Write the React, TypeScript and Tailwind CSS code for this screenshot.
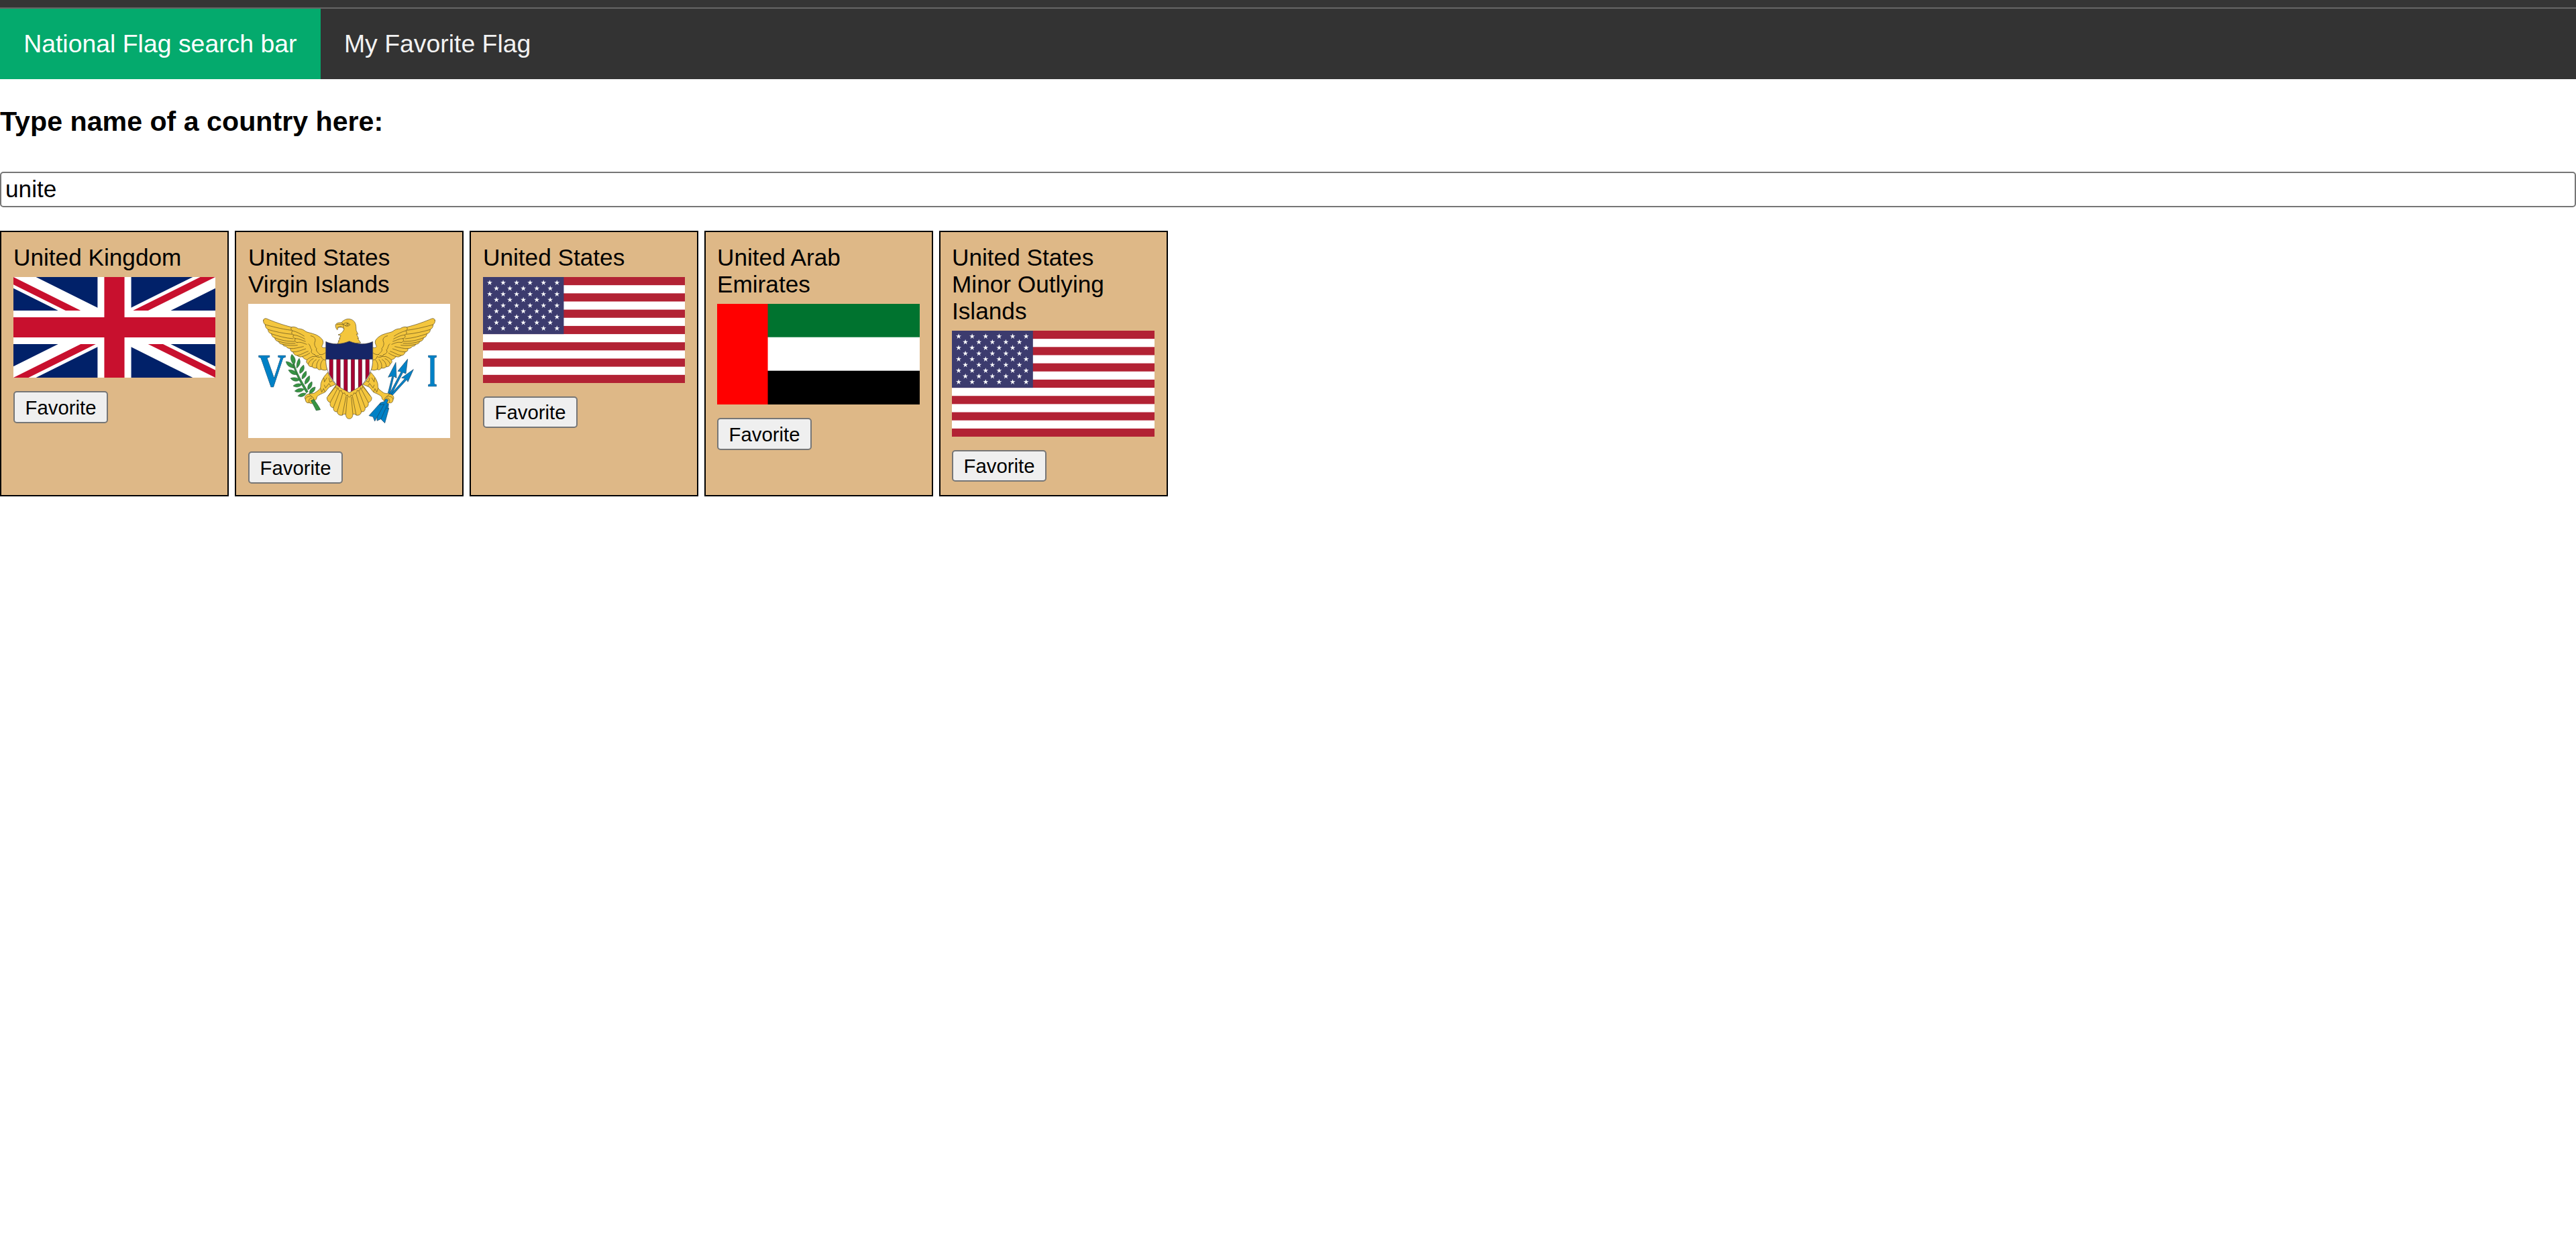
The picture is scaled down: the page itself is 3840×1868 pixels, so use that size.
import React from "react";

const GOLD = "#f4c63d";

function UnitedKingdomFlag() {
  return (
    <svg className="block h-[150px] w-full" viewBox="0 0 60 30" preserveAspectRatio="none">
      <clipPath id="uk-diagonals">
        <path d="M30,15h30v15zv15h-30zh-30v-15zv-15h30z" />
      </clipPath>
      <path d="M0,0v30h60v-30z" fill="#012169" />
      <path d="M0,0L60,30M60,0L0,30" stroke="#fff" strokeWidth="6" />
      <path d="M0,0L60,30M60,0L0,30" clipPath="url(#uk-diagonals)" stroke="#C8102E" strokeWidth="4" />
      <path d="M30,0v30M0,15h60" stroke="#fff" strokeWidth="10" />
      <path d="M30,0v30M0,15h60" stroke="#C8102E" strokeWidth="6" />
    </svg>
  );
}

const STAR = "M0,-4.2L0.95,-1.3H4L1.53,0.5L2.47,3.4L0,1.6L-2.47,3.4L-1.53,0.5L-4,-1.3H-0.95Z";

function UnitedStatesFlag() {
  const stars: React.ReactElement[] = [];
  for (let row = 0; row < 9; row++) {
    const count = row % 2 === 0 ? 6 : 5;
    for (let i = 0; i < count; i++) {
      const x = 10 + i * 20.05 + (row % 2) * 10.03;
      const y = 8.5 + row * 8.5;
      stars.push(<path key={`${row}-${i}`} d={STAR} transform={`translate(${x} ${y})`} />);
    }
  }
  return (
    <svg className="block h-[158px] w-full" viewBox="0 0 301 158" preserveAspectRatio="none">
      <rect width="301" height="158" fill="#fff" />
      {[0, 2, 4, 6, 8, 10, 12].map((i) => (
        <rect key={i} y={(i * 158) / 13} width="301" height={158 / 13} fill="#B22234" />
      ))}
      <rect width="120.4" height="85.1" fill="#3C3B6E" />
      <g fill="#fff">{stars}</g>
    </svg>
  );
}

function EmiratesFlag() {
  return (
    <svg className="block h-[150px] w-full" viewBox="0 0 301 150" preserveAspectRatio="none">
      <rect width="301" height="150" fill="#fff" />
      <rect width="301" height="49.7" fill="#00732F" />
      <rect y="99.7" width="301" height="50.3" fill="#000" />
      <rect width="75.3" height="150" fill="#FF0000" />
    </svg>
  );
}

const SHIELD =
  "M377,208C405,222 445,222 482,206C520,222 559,222 587,208V286C587,329 577,350 545,394C529,414 508,420 482,436C456,420 436,414 419,394C387,350 377,329 377,286Z";

function VirginIslandsFlag() {
  return (
    <svg className="block h-[200px] w-full" viewBox="30 39 903 600" preserveAspectRatio="none">
      <rect x="30" y="39" width="903" height="600" fill="#fff" />
      {/* wings */}
      <g id="vi-wing" fill={GOLD} stroke="#5a4a1c" strokeWidth="2" strokeLinejoin="round" strokeLinecap="round">
        <path d="M98,112C96,118 99,126 106,132C106,142 110,149 119,154C118,163 125,171 134,173C134,182 140,189 149,191C149,199 156,206 165,207C168,215 175,220 184,220C185,226 191,229 199,229C203,236 210,239 219,239C217,247 222,254 231,254C232,263 240,270 249,270C255,276 263,278 272,275C277,283 285,288 293,289C288,297 290,304 298,308C300,317 307,322 315,320C322,327 331,328 337,326C343,334 350,336 356,332C364,336 376,338 382,333L385,310L378,290V234C370,236 362,236 359,230C361,221 368,217 364,203C359,193 347,184 335,178C313,169 299,168 288,163C277,153 264,150 254,150C244,143 233,140 224,143C179,132 143,118 112,105C104,103 99,106 98,112Z" />
        <path fill="none" d="M106,132C133,139 174,151 223,157M119,154C151,163 187,172 226,175M134,173C167,184 196,192 231,195M149,191C177,202 202,207 237,207M165,207C189,213 211,218 240,216M184,220C207,225 229,227 250,224M224,143C219,149 221,155 228,159C222,167 224,175 233,178C229,185 231,192 241,194C236,203 239,210 249,212M228,159C249,165 263,172 280,183M233,178C250,179 266,187 283,196M241,194C258,194 271,203 286,207M249,212C263,208 276,214 291,220M219,239C238,241 257,233 277,230M231,254C251,255 267,246 287,240M249,270C269,267 278,257 298,251M272,275C286,270 294,267 305,259M310,182C325,185 333,194 329,207C324,217 327,229 336,239C330,250 344,257 350,266M300,218C311,228 306,238 315,245C307,256 317,263 327,266M293,289C300,281 310,279 318,274C328,278 337,269 345,271M298,308C303,295 311,288 321,284M315,320C316,305 323,294 334,288M337,326C333,311 339,298 348,288M356,332C350,316 354,301 363,291M327,266C334,279 348,281 356,274C361,289 371,292 378,289M350,266C360,268 369,263 376,257" />
      </g>
      <use href="#vi-wing" transform="translate(963 0) scale(-1 1)" />

      {/* head */}
      <g fill={GOLD} stroke="#5a4a1c" strokeWidth="2" strokeLinejoin="round">
        <path d="M425,224L436,206L432,207L441,194L437,195L444,181L432,177C440,176 455,166 459,151C451,143 439,141 430,146C432,151 431,153 428,155C422,148 419,139 421,132C425,125 433,122 446,123C456,111 470,105 484,107C502,110 511,124 512,140L513,158L521,175L514,174L524,194L519,193L533,213Z" />
        <path d="M425,132C438,128 448,132 456,130M430,144L448,140M448,123C455,132 462,135 469,138M456,130C462,121 477,122 486,132C480,140 469,141 462,134M456,130C454,138 455,146 459,151" fill="none" />
        <circle cx="474" cy="131" r="4" fill="none" />
      </g>

      {/* tail */}
      <g fill={GOLD} stroke="#5a4a1c" strokeWidth="2" strokeLinejoin="round">
        <path d="M424,400L382,458C382,471 388,478 397,480C394,492 399,503 411,503C410,516 417,524 428,521C428,532 438,540 451,537C454,534 460,530 466,533C467,547 473,553 482,553C491,553 497,547 498,533C504,530 509,533 513,537C526,540 535,532 536,521C547,524 554,516 553,503C565,502 569,492 567,480C578,478 583,468 582,458L540,400Z" />
        <path fill="none" d="M397,480L429,419M411,503L440,427M428,521L453,437M451,537L468,451M466,533L473,455M498,533L491,455M513,537L496,451M536,521L511,437M553,503L524,427M567,480L535,419M388,451L420,410M576,451L544,410M424,400C418,415 424,420 432,414C433,427 441,431 447,426C447,437 456,442 461,437C464,449 472,452 474,446C474,459 490,459 490,446C494,452 501,447 503,437C509,442 517,437 517,426C525,431 532,425 532,414C540,420 545,415 540,400" />
      </g>

      {/* legs */}
      <g id="vi-leg" fill={GOLD} stroke="#5a4a1c" strokeWidth="2" strokeLinejoin="round">
        <path d="M386,345C374,358 360,374 355,395C353,406 356,413 349,421C340,429 331,435 326,438C314,442 303,438 293,445C284,449 280,460 286,467C286,477 294,485 303,481C312,489 325,482 325,472C333,470 337,462 337,455C345,446 358,441 370,436C381,430 383,418 394,411L421,399C405,383 393,366 386,345Z" />
        <path fill="none" d="M368,370L371,388L382,369M370,401L376,415L391,395L399,407M353,416L359,434L367,418L374,434M391,370L395,389L406,384M286,467C288,456 297,452 307,453M303,481C299,468 305,459 316,460M325,472C325,463 320,455 310,450M302,442L313,455" />
      </g>
      <use href="#vi-leg" transform="translate(964 0) scale(-1 1)" />

      {/* shield */}
      <clipPath id="vi-shield">
        <path d={SHIELD} />
      </clipPath>
      <path d={SHIELD} fill="#fff" />
      <g clipPath="url(#vi-shield)">
        {[393, 425.5, 458, 490, 522.5, 555].map((x) => (
          <rect key={x} x={x} y="286" width="16" height="155" fill="#a60032" stroke="#3d1a26" strokeWidth="1.5" />
        ))}
        <rect x="377" y="200" width="210" height="86" fill="#162667" stroke="#111a3c" strokeWidth="2" />
      </g>
      <path d={SHIELD} fill="none" stroke="#3f3a38" strokeWidth="2" />

      {/* olive branch */}
      <g fill="#369443" stroke="#24502b" strokeWidth="1.8" strokeLinejoin="round">
        <path d="M229,308L236,309C246,343 264,378 298,431L290,437C260,386 242,354 229,308Z" />
        <path d="M225,265C216,281 221,297 234,312C246,296 241,278 225,265Z" />
        <path d="M199,297C203,315 214,323 234,326C231,307 218,299 199,297Z" />
        <path d="M258,283C266,299 262,313 247,327C245,308 249,295 258,283Z" />
        <path d="M210,335C219,351 232,358 249,355C241,338 226,333 210,335Z" />
        <path d="M278,313C284,331 276,345 261,350C257,334 266,320 278,313Z" />
        <path d="M219,372C231,386 247,389 260,379C250,368 234,366 219,372Z" />
        <path d="M289,340C294,357 286,369 271,375C268,360 277,347 289,340Z" />
        <path d="M231,406C245,414 260,412 270,400C258,393 243,395 231,406Z" />
        <path d="M304,361C308,379 300,391 284,398C281,383 290,369 304,361Z" />
        <path d="M238,429C251,438 270,434 280,421C267,414 251,417 238,429Z" />
        <path d="M315,387C318,404 311,416 297,423C293,408 301,394 315,387Z" />
        <path d="M252,451C266,458 281,453 289,440C275,435 262,440 252,451Z" />
        <path d="M330,411C329,426 322,437 304,440C303,424 314,413 330,411Z" />
        <path d="M310,472L323,466C334,480 345,496 353,512L334,516C326,499 318,485 310,472Z" />
      </g>

      {/* arrows */}
      <g fill="#0081c6" stroke="#1d3c57" strokeWidth="1.8" strokeLinejoin="round">
        <path d="M655,438L674,362L656,367L690,301L693,371L681,363L663,441Z" />
        <path d="M662,441L714,343L699,340L743,286L735,351L722,346L671,444Z" />
        <path d="M669,442L731,373L716,370L769,332L744,388L739,378L676,447Z" />
        <path d="M645,464L656,468L650,484L658,487L656,503L659,507L641,572L623,554L606,562V546L596,564L588,544L570,539L622,481L638,476Z" />
        <path d="M638,488L606,546M652,490L624,554M659,507L648,506M622,481L618,491L638,488" fill="none" />
      </g>

      {/* initials */}
      <g className="font-['Liberation_Serif',serif] font-bold" fill="#0081c6" stroke="#23557a" strokeWidth="2">
        <text x="75" y="409" fontSize="212" textLength="124" lengthAdjust="spacingAndGlyphs">V</text>
        <text x="831" y="409" fontSize="212" textLength="45" lengthAdjust="spacingAndGlyphs">I</text>
      </g>
    </svg>
  );
}

const countries = [
  { name: "United Kingdom", Flag: UnitedKingdomFlag, inset: "pl-[18px]", button: "h-[48px]" },
  { name: "United States Virgin Islands", Flag: VirginIslandsFlag, inset: "pl-[18px]", button: "h-[48px]" },
  { name: "United States", Flag: UnitedStatesFlag, inset: "pl-[18px]", button: "h-[47px]" },
  { name: "United Arab Emirates", Flag: EmiratesFlag, inset: "pl-[17px]", button: "h-[48px]" },
  { name: "United States Minor Outlying Islands", Flag: UnitedStatesFlag, inset: "pl-[17px]", button: "h-[47px]" },
];

export default function App() {
  return (
    <div className="min-h-screen bg-white font-['Liberation_Sans',Arial,sans-serif] text-black">
      <div className="h-[13px] border-b-2 border-[#666666] bg-[#353535]" />
      <nav className="flex h-[105px] bg-[#333333] text-[37.4px] leading-[43px]">
        <a className="bg-[#04AA6D] px-[35.2px] pt-[31px] text-white">National Flag search bar</a>
        <a className="px-[35.2px] pt-[31px] text-[#f2f2f2]">My Favorite Flag</a>
      </nav>
      <h3 className="mt-[40px] text-[41.18px] leading-[47px] font-bold">Type name of a country here:</h3>
      <input
        className="mt-[51px] block h-[53px] w-full rounded-[5px] border-2 border-[#767676] bg-white px-[6px] pb-[2px] text-[35.2px] leading-[40px] outline-none"
        defaultValue="unite"
      />
      <div className="mt-[35px] flex h-[396px] gap-[9px]">
        {countries.map(({ name, Flag, inset, button }) => (
          <div key={name} className={`w-[341px] border-2 border-black bg-[#DEB887] pt-[18px] pr-[18px] ${inset}`}>
            <div className="mb-[9px] text-[35.2px] leading-[40px]">{name}</div>
            <Flag />
            <button
              className={`mt-[20px] block w-[141px] rounded-[5px] border-2 border-[#767676] bg-[#efefef] text-center text-[29.33px] leading-[43px] ${button}`}
            >
              Favorite
            </button>
          </div>
        ))}
      </div>
    </div>
  );
}
